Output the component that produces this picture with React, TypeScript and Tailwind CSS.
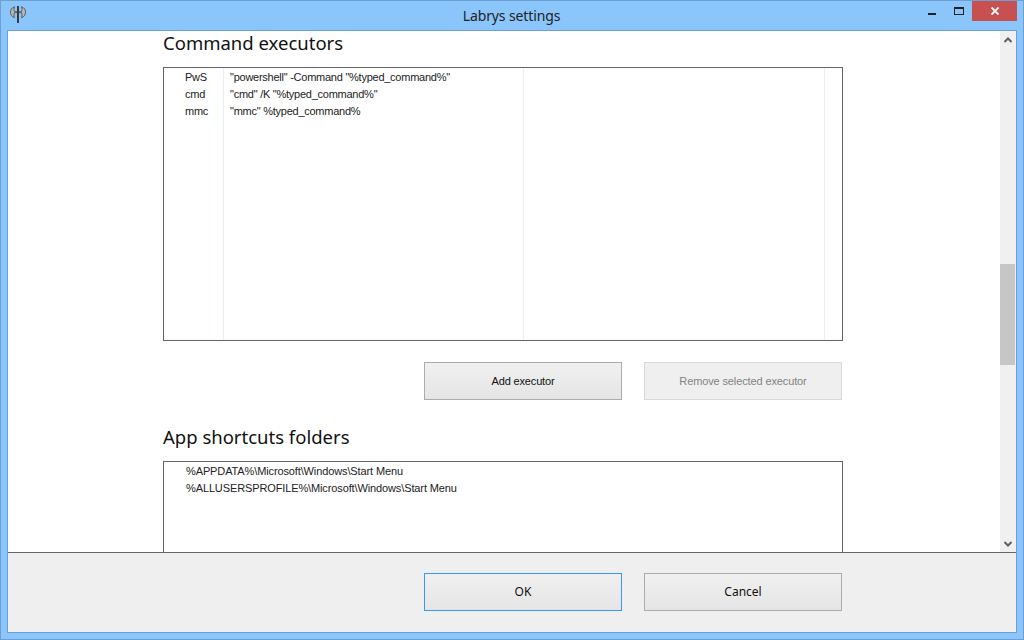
import React from "react";

const uiFont = "font-['Noto_Sans','Open_Sans',sans-serif]";
const listFont = "font-['Liberation_Sans',Arial,sans-serif]";

const executors = [
  { name: "PwS", command: '"powershell" -Command "%typed_command%"' },
  { name: "cmd", command: '"cmd" /K "%typed_command%"' },
  { name: "mmc", command: '"mmc" %typed_command%' },
];

const folders = ["%APPDATA%\\Microsoft\\Windows\\Start Menu", "%ALLUSERSPROFILE%\\Microsoft\\Windows\\Start Menu"];

function AppIcon() {
  return (
    <svg width="16" height="17" viewBox="0 0 16 17" fill="none">
      <path d="M4.5 0.8 C1.6 1.6 0.5 4 0.5 6.2 C0.5 8.4 1.6 10.8 4.5 11.6 C3.8 10 3.8 8 4.5 7 L4.5 5.4 C3.8 4.4 3.8 2.4 4.5 0.8 Z" fill="#b9b9b9" stroke="#5a5a5a" strokeWidth="1" />
      <path d="M11.5 0.8 C14.4 1.6 15.5 4 15.5 6.2 C15.5 8.4 14.4 10.8 11.5 11.6 C12.2 10 12.2 8 11.5 7 L11.5 5.4 C12.2 4.4 12.2 2.4 11.5 0.8 Z" fill="#b9b9b9" stroke="#5a5a5a" strokeWidth="1" />
      <rect x="4" y="5" width="8" height="2.2" fill="#6e6e6e" />
      <rect x="7" y="0" width="2" height="17" fill="#3a3a3a" />
    </svg>
  );
}

function TitleBar() {
  return (
    <div className="flex h-[29px] shrink-0 items-center">
      <div className="flex w-[34px] justify-center pb-[2px]">
        <AppIcon />
      </div>
      <div className={`flex-1 pl-[60px] text-center text-[14px] tracking-[-0.12px] text-[#222] ${uiFont}`}>Labrys settings</div>
      <div className="mr-[6px] flex h-[20px] items-center self-start">
        <div className="mr-[18px] mt-[12px] h-[2px] w-[8px] self-start bg-[#222]"></div>
        <div className="mr-[8px] h-[8px] w-[10px] border border-t-2 border-[#222]"></div>
        <div className="flex h-[20px] w-[45px] items-center justify-center bg-[#c75050]">
          <svg width="8" height="8" viewBox="0 0 8 8" fill="none">
            <path d="M0.5 0.5 L7.5 7.5 M7.5 0.5 L0.5 7.5" stroke="#fff" strokeWidth="1.8" />
          </svg>
        </div>
      </div>
    </div>
  );
}

function ActionButton({ label, disabled, primary, footer }: { label: string; disabled?: boolean; primary?: boolean; footer?: boolean }) {
  const base = "flex h-[38px] w-[198px] items-center justify-center border";
  if (disabled) {
    return <button className={`${base} ${listFont} border-[#d9d9d9] bg-[#efefef] text-[11px] tracking-[-0.12px] text-[#838383]`}>{label}</button>;
  }
  return (
    <button
      className={`${base} ${footer ? `${uiFont} text-[12px]` : `${listFont} text-[11px] tracking-[-0.15px]`} bg-gradient-to-b from-[#f0f0f0] to-[#e5e5e5] text-[#111] ${
        primary ? "border-[#3399ff]" : "border-[#acacac]"
      }`}
    >
      {label}
    </button>
  );
}

function Scrollbar() {
  return (
    <div className="flex w-[16px] shrink-0 flex-col items-center bg-[#f0f0f0]">
      <div className="flex h-[17px] shrink-0 items-center justify-center">
        <svg width="8" height="6" viewBox="0 0 8 6" fill="none">
          <path d="M0.5 5 L4 1.5 L7.5 5" stroke="#606060" strokeWidth="2" />
        </svg>
      </div>
      <div className="mt-[216px] h-[101px] w-[15px] shrink-0 self-start bg-[#c6c6c6]"></div>
      <div className="flex-1"></div>
      <div className="flex h-[17px] shrink-0 items-center justify-center">
        <svg width="8" height="6" viewBox="0 0 8 6" fill="none">
          <path d="M0.5 1 L4 4.5 L7.5 1" stroke="#606060" strokeWidth="2" />
        </svg>
      </div>
    </div>
  );
}

export default function App() {
  return (
    <div className="flex h-[640px] w-[1024px] flex-col overflow-hidden border border-[#6d9fd3] bg-[#8ac5fb]">
      <TitleBar />
      <div className="mx-[6px] mb-[6px] flex min-h-0 flex-1 flex-col border border-[#6d9fd3]">
        <div className="flex h-[522px] shrink-0 border-b border-b-[#646464]">
          <div className="min-w-0 flex-1 overflow-hidden bg-white pl-[155px]">
            <h2 className={`h-[36px] text-[18.5px] leading-[24px] text-[#111] ${uiFont}`}>Command executors</h2>
            <div className={`flex h-[274px] w-[680px] border border-[#646464] text-[11px] leading-[17px] tracking-[-0.25px] text-[#222] ${listFont}`}>
              <div className="w-[60px] shrink-0 border-r border-r-[#e6f0fa] pl-[21px] pt-[1px]">
                {executors.map((e) => (
                  <div key={e.name}>{e.name}</div>
                ))}
              </div>
              <div className="w-[300px] shrink-0 border-r border-r-[#e6f0fa] pl-[6px] pt-[1px]">
                {executors.map((e) => (
                  <div key={e.name} className="whitespace-nowrap">
                    {e.command}
                  </div>
                ))}
              </div>
              <div className="w-[301px] shrink-0 border-r border-r-[#e6f0fa]"></div>
            </div>
            <div className="mt-[21px] flex w-[679px] justify-end gap-[22px]">
              <ActionButton label="Add executor" />
              <ActionButton label="Remove selected executor" disabled />
            </div>
            <h2 className={`mt-[25px] h-[36px] text-[18.5px] leading-[24px] text-[#111] ${uiFont}`}>App shortcuts folders</h2>
            <div className={`h-[200px] w-[680px] border border-[#646464] pl-[22px] pt-[1px] text-[11px] leading-[17px] tracking-[-0.12px] text-[#222] ${listFont}`}>
              {folders.map((f) => (
                <div key={f}>{f}</div>
              ))}
            </div>
          </div>
          <Scrollbar />
        </div>
        <div className="flex min-h-0 flex-1 justify-end gap-[22px] bg-[#efefef] pr-[174px] pt-[20px]">
          <ActionButton label="OK" primary footer />
          <ActionButton label="Cancel" footer />
        </div>
      </div>
    </div>
  );
}
